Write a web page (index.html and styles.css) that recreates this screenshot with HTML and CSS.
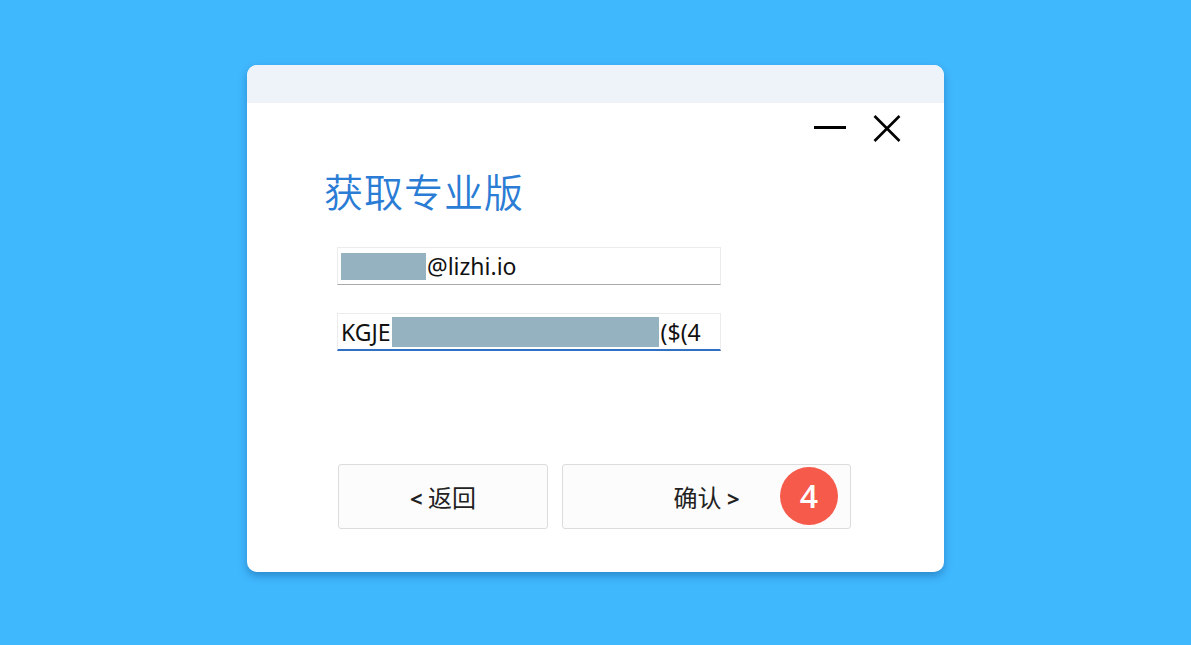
FILE: index.html
```html
<!DOCTYPE html>
<html lang="zh-CN">
<head>
    <meta charset="UTF-8">
    <meta name="viewport" content="width=device-width, initial-scale=1.0">
    <title>获取专业版</title>
    <link rel="stylesheet" href="styles.css">
</head>
<body>
    <div class="window">
        <div class="titlebar"></div>
        <div class="controls">
            <svg class="ctl-min" width="32" height="27" viewBox="0 0 32 27">
                <line x1="0" y1="12.5" x2="32" y2="12.5" stroke="#000" stroke-width="3"/>
            </svg>
            <svg class="ctl-close" width="28" height="27" viewBox="0 0 28 27">
                <line x1="1.5" y1="1" x2="26.5" y2="26" stroke="#000" stroke-width="2.6"/>
                <line x1="26.5" y1="1" x2="1.5" y2="26" stroke="#000" stroke-width="2.6"/>
            </svg>
        </div>
        <h1 class="title">获取专业版</h1>
        <div class="form">
            <div class="field">
                <span class="mask mask-email"></span><span>@lizhi.io</span>
            </div>
            <div class="field active">
                <span>KGJE</span><span class="mask mask-key"></span><span>($(4</span>
            </div>
        </div>
        <div class="actions">
            <button class="btn btn-back"><span class="arrow">&lt;</span> 返回</button>
            <button class="btn btn-ok">
                确认 <span class="arrow">&gt;</span>
                <span class="badge">4</span>
            </button>
        </div>
    </div>
</body>
</html>
```

FILE: styles.css
```css
body {
    margin: 0;
    background-color: #40b8fe;
    font-family: "Noto Sans", "Noto Sans CJK SC", sans-serif;
    height: 645px;
    overflow: hidden;
}
.window {
    width: 697px;
    height: 507px;
    margin: 65px 0 0 247px;
    background-color: #fff;
    border-radius: 10px;
    overflow: hidden;
    box-shadow: 0 4px 8px rgba(0, 50, 110, 0.35);
}
.titlebar {
    height: 38px;
    background-color: #eef3fa;
}
.controls {
    display: flex;
    justify-content: flex-end;
    align-items: center;
    gap: 27px;
    padding: 12px 43px 0 0;
}
.title {
    margin: 20px 0 0 77px;
    font-family: "Noto Sans CJK SC", sans-serif;
    font-weight: 350;
    font-size: 39px;
    line-height: 56px;
    letter-spacing: 1px;
    color: #2a7cd5;
}
.form {
    margin: 29px 0 0 90px;
    display: flex;
    flex-direction: column;
    gap: 28px;
}
.field {
    box-sizing: border-box;
    width: 384px;
    height: 38px;
    padding: 0 0 0 3px;
    display: flex;
    align-items: center;
    border: 1px solid #ececec;
    border-bottom: 1.5px solid #a9a9a9;
    font-size: 23px;
    color: #111;
}
.field.active {
    border-bottom: 2px solid #2f6fc4;
}
.mask {
    display: inline-block;
    background-color: #95b2c1;
}
.mask-email {
    width: 85px;
    height: 27px;
    margin-right: 1px;
}
.mask-key {
    width: 267px;
    height: 30px;
    margin: 0 2px 0 1px;
}
.actions {
    margin: 113px 0 0 91px;
    display: flex;
    gap: 14px;
}
.btn {
    position: relative;
    box-sizing: border-box;
    height: 65px;
    background-color: #fcfcfc;
    border: 1px solid #dcdcdc;
    border-radius: 3px;
    font-family: "Noto Sans CJK SC", sans-serif;
    font-size: 24px;
    color: #222;
    cursor: pointer;
}
.btn .arrow {
    font-family: "Noto Sans", sans-serif;
    font-weight: 700;
    font-size: 22px;
}
.btn-back {
    width: 210px;
}
.btn-ok {
    width: 289px;
}
.badge {
    position: absolute;
    right: 12px;
    top: 2px;
    width: 58px;
    height: 58px;
    border-radius: 50%;
    background-color: #f65a4b;
    color: #fff;
    font-family: "Open Sans", sans-serif;
    font-weight: 600;
    font-size: 32px;
    line-height: 58px;
    text-align: center;
}
```
